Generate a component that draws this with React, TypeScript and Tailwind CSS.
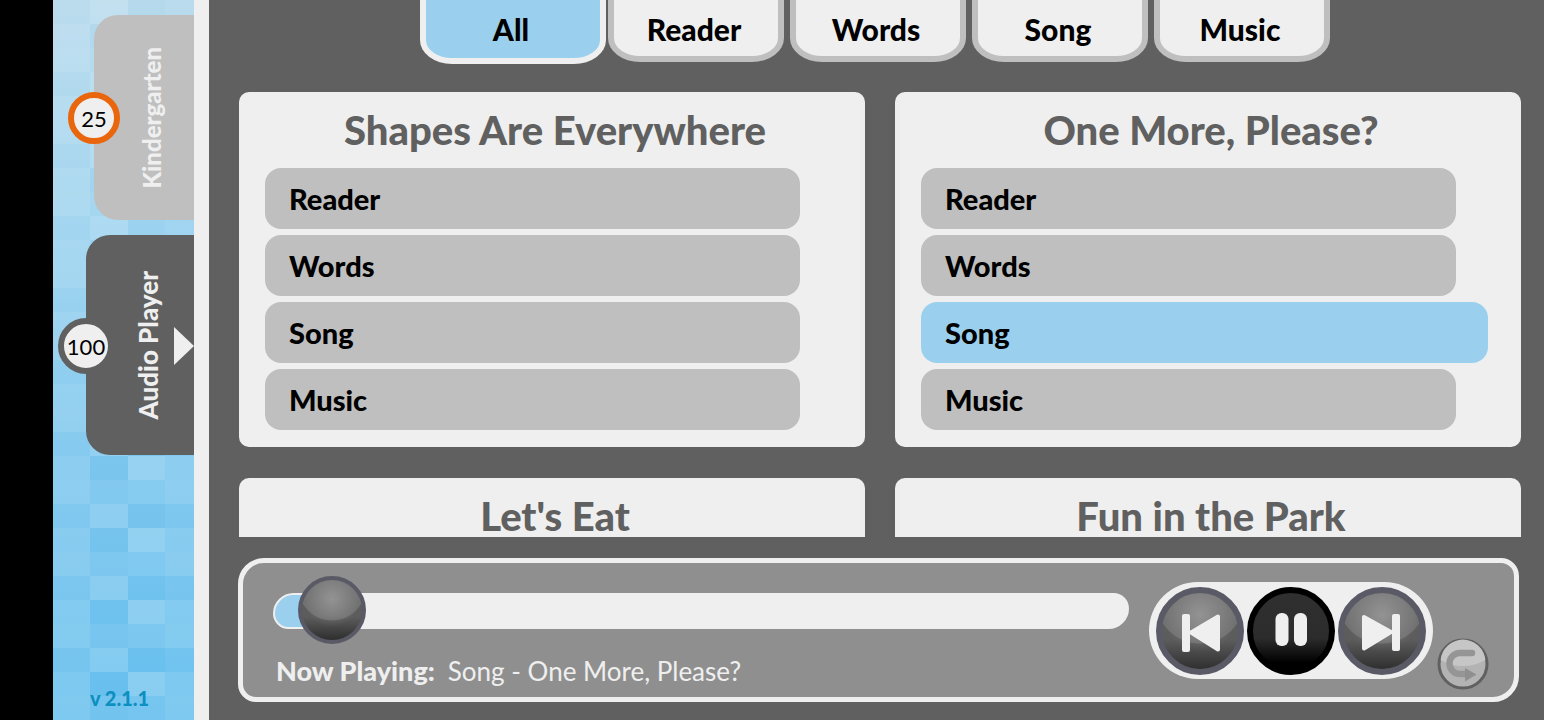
import { useState } from "react";

type Unit = { title: string; tracks: string[] };

const TRACKS = ["Reader", "Words", "Song", "Music"];
const FILTERS = ["All", ...TRACKS];
const UNITS: Unit[] = [
  { title: "Shapes Are Everywhere", tracks: TRACKS },
  { title: "One More, Please?", tracks: TRACKS },
  { title: "Let's Eat", tracks: [] },
  { title: "Fun in the Park", tracks: [] },
];

// Three alternating rows of translucent tiles form the sidebar mosaic.
const MOSAIC = [
  ["bg-white/8", "bg-white/18", "bg-white/0", "bg-white/5"],
  ["bg-white/14", "bg-white/0", "bg-white/22", "bg-white/14"],
  ["bg-white/16", "bg-white/8", "bg-white/10", "bg-white/16"],
];

const GLOSS =
  "bg-[radial-gradient(circle_at_50%_14%,rgba(255,255,255,0.12)_0_50%,transparent_51%),radial-gradient(circle_at_50%_32%,rgba(255,255,255,0.24),transparent_50%),linear-gradient(#606060_0%,#5c5c5c_60%,#262626_100%)]";

function Mosaic() {
  return (
    <div className="absolute inset-0 grid auto-rows-[24px] grid-cols-[37px_38px_37px_1fr] overflow-hidden">
      {Array.from({ length: 90 }, (_, row) =>
        MOSAIC[row % 3].map((tone, col) => <span key={`${row}-${col}`} className={tone} />),
      )}
    </div>
  );
}

function Sidebar() {
  return (
    <aside className="relative flex w-[156px] shrink-0 flex-col items-end gap-[15px] border-r-[15px] border-[#efefef] bg-[linear-gradient(#b6d9ec_0%,#9dd3ef_30%,#7cc6ee_62%,#66bfee_100%)] pt-[15px]">
      <Mosaic />
      <button className="relative flex h-[205px] w-[100px] items-center justify-center rounded-l-[24px] bg-[#bfbfbf] pl-4">
        <span className="rotate-180 text-2xl font-black text-[#efefef] [writing-mode:vertical-rl]">
          Kindergarten
        </span>
        <span className="absolute top-[77px] left-[-26px] flex size-[52px] items-center justify-center rounded-full border-[6px] border-[#e9660c] bg-[#efefef] text-[22px] text-black">
          25
        </span>
      </button>
      <button
        aria-current="page"
        className="relative flex h-[220px] w-[108px] items-center justify-center rounded-l-[24px] bg-[#606060] pl-4"
      >
        <span className="rotate-180 text-[26px] font-black text-[#efefef] [writing-mode:vertical-rl]">
          Audio Player
        </span>
        <span className="absolute top-[83px] left-[-28px] flex size-[56px] items-center justify-center rounded-full border-[6px] border-[#606060] bg-[#efefef] text-[22px] text-black">
          100
        </span>
        <svg viewBox="0 0 20 38" className="absolute top-[92px] right-0 h-[38px] w-5">
          <path d="M0 0L20 19L0 38Z" fill="#efefef" />
        </svg>
      </button>
      <p className="relative mt-auto w-full pr-2 pb-[10px] text-center text-xl leading-6 font-black text-[#0d8fc0]">
        v 2.1.1
      </p>
    </aside>
  );
}

function FilterTabs({ value, onChange }: { value: string; onChange: (v: string) => void }) {
  return (
    <nav className="flex h-[64px] shrink-0 items-start justify-center gap-[6px] pr-[10px] text-[30px] font-black text-black">
      {FILTERS.map((name) => (
        <button
          key={name}
          onClick={() => onChange(name)}
          className={
            name === value
              ? "-mr-1 h-[64px] w-[186px] rounded-b-[32px_24px] border-x-[6px] border-b-[6px] border-[#efefef] bg-[#9ad0ee] pr-1"
              : "h-[62px] w-[176px] rounded-b-[32px_24px] border-x-[6px] border-b-[6px] border-[#bfbfbf] bg-[#efefef] pt-[2px] pr-1"
          }
        >
          {name}
        </button>
      ))}
    </nav>
  );
}

function UnitCard({
  unit,
  current,
  onPlay,
}: {
  unit: Unit;
  current: string;
  onPlay: (id: string) => void;
}) {
  return (
    <section className="min-h-[355px] rounded-[10px] bg-[#efefef] pb-[17px]">
      <h2 className="py-[17px] pl-[6px] text-center text-[40px] leading-[42px] font-black text-[#606060]">
        {unit.title}
      </h2>
      <ul className="flex flex-col gap-[6px] pr-[33px] pl-[26px]">
        {unit.tracks.map((track) => {
          const id = `${track} - ${unit.title}`;
          return (
            <li key={track} className={id === current ? "" : "pr-8"}>
              <button
                onClick={() => onPlay(id)}
                className={
                  id === current
                    ? "h-[61px] w-full rounded-2xl bg-[#9ad0ee] px-6 text-left text-[29px] font-black text-black"
                    : "h-[61px] w-full rounded-2xl bg-[#bfbfbf] px-6 text-left text-[29px] font-black text-black"
                }
              >
                {track}
              </button>
            </li>
          );
        })}
      </ul>
    </section>
  );
}

function Player({ current }: { current: string }) {
  const [position, setPosition] = useState(32);
  const fill = (position / 1000) * 92 + 4;
  return (
    <section className="mt-[21px] mr-[2px] -ml-px flex h-[144px] shrink-0 rounded-[26px_18px] border-[5px] border-[#efefef] bg-[#8f8f8f] pr-[25px] pl-[30px]">
      <div className="flex min-w-0 flex-1 flex-col pt-[14px]">
        <input
          type="range"
          aria-label="Playback position"
          min={0}
          max={1000}
          value={position}
          onChange={(e) => setPosition(Number(e.target.value))}
          style={{
            backgroundImage: `linear-gradient(90deg, #9ad0ee ${fill}%, #efefef ${fill}%)`,
          }}
          className="my-4 h-9 w-full appearance-none rounded-[24px_18px] border-2 border-[#efefef] [&::-webkit-slider-runnable-track]:h-8 [&::-webkit-slider-thumb]:-mx-[2px] [&::-webkit-slider-thumb]:mt-[-19px] [&::-webkit-slider-thumb]:size-[68px] [&::-webkit-slider-thumb]:appearance-none [&::-webkit-slider-thumb]:rounded-full [&::-webkit-slider-thumb]:border-4 [&::-webkit-slider-thumb]:border-[#5a5a66] [&::-webkit-slider-thumb]:bg-[radial-gradient(circle_at_50%_16%,rgba(255,255,255,0.12)_0_50%,transparent_51%),radial-gradient(circle_at_50%_34%,rgba(255,255,255,0.24),transparent_50%),linear-gradient(#606060_0%,#5c5c5c_60%,#262626_100%)] [&::-webkit-slider-thumb]:bg-origin-border"
        />
        <p className="flex items-baseline gap-[13px] pt-[8px] pl-[3px] text-[26px] leading-9 text-[#efefef]">
          <span className="text-[27px] font-black">Now Playing:</span>
          <span>{current}</span>
        </p>
      </div>
      <div className="mt-[19px] ml-5 flex h-[97px] shrink-0 items-center gap-[3px] rounded-full bg-[#efefef] px-[7px]">
        <button
          aria-label="Previous"
          className={`size-[88px] rounded-full border-[6px] border-[#5a5a66] bg-origin-border ${GLOSS}`}
        >
          <svg viewBox="6 6 76 76" fill="#efefef" className="size-full">
            <rect x="26" y="27" width="8" height="38" rx="2" />
            <path d="M35 45.5L62 29.5V62.5Z" stroke="#efefef" strokeWidth="4" strokeLinejoin="round" />
          </svg>
        </button>
        <button
          aria-label="Pause"
          className="size-[88px] rounded-full border-[6px] border-black bg-[linear-gradient(#303030_0%,#2c2c2c_58%,#000_86%)] bg-origin-border"
        >
          <svg viewBox="6 6 76 76" fill="#efefef" className="size-full">
            <rect x="28.5" y="26" width="13" height="33" rx="6" />
            <rect x="47" y="26" width="13" height="33" rx="6" />
          </svg>
        </button>
        <button
          aria-label="Next"
          className={`size-[88px] rounded-full border-[6px] border-[#5a5a66] bg-origin-border ${GLOSS}`}
        >
          <svg viewBox="6 6 76 76" fill="#efefef" className="size-full">
            <rect x="54" y="27" width="8" height="37" rx="2" />
            <path d="M53 45L26 30V61.5Z" stroke="#efefef" strokeWidth="4" strokeLinejoin="round" />
          </svg>
        </button>
      </div>
      <button aria-label="Repeat" className="mb-[7px] ml-1 size-[52px] shrink-0 self-end">
        <svg viewBox="0 0 52 52" className="size-full">
          <circle cx="26" cy="26" r="24" fill="#b3b3b3" stroke="#606060" strokeWidth="3" />
          <path d="M3.6 22A22.5 22.5 0 0 1 48.4 22Q38 28 26 28T3.6 22Z" fill="#c6c6c6" />
          <path d="M35 15H23A10.5 10.5 0 0 0 23 36H29" fill="none" stroke="#959595" strokeWidth="6.5" strokeLinecap="round" />
          <path d="M28 30L39.5 36.5L28 43.5Z" fill="#8f8f8f" />
        </svg>
      </button>
    </section>
  );
}

export default function App() {
  const [filter, setFilter] = useState("All");
  const [current, setCurrent] = useState("Song - One More, Please?");
  return (
    <div className="flex h-screen bg-[#606060] pl-[53px] font-['Lato','Liberation_Sans',sans-serif] [background-image:linear-gradient(90deg,#000_53px,transparent_53px)]">
      <Sidebar />
      <main className="flex min-w-0 flex-1 flex-col pr-[23px] pb-[18px] pl-[30px]">
        <FilterTabs value={filter} onChange={setFilter} />
        <div className="mt-7 grid min-h-0 flex-1 grid-cols-2 content-start gap-x-[30px] gap-y-[31px] overflow-y-auto [scrollbar-width:none]">
          {UNITS.map((unit) => (
            <UnitCard key={unit.title} unit={unit} current={current} onPlay={setCurrent} />
          ))}
        </div>
        <Player current={current} />
      </main>
    </div>
  );
}
